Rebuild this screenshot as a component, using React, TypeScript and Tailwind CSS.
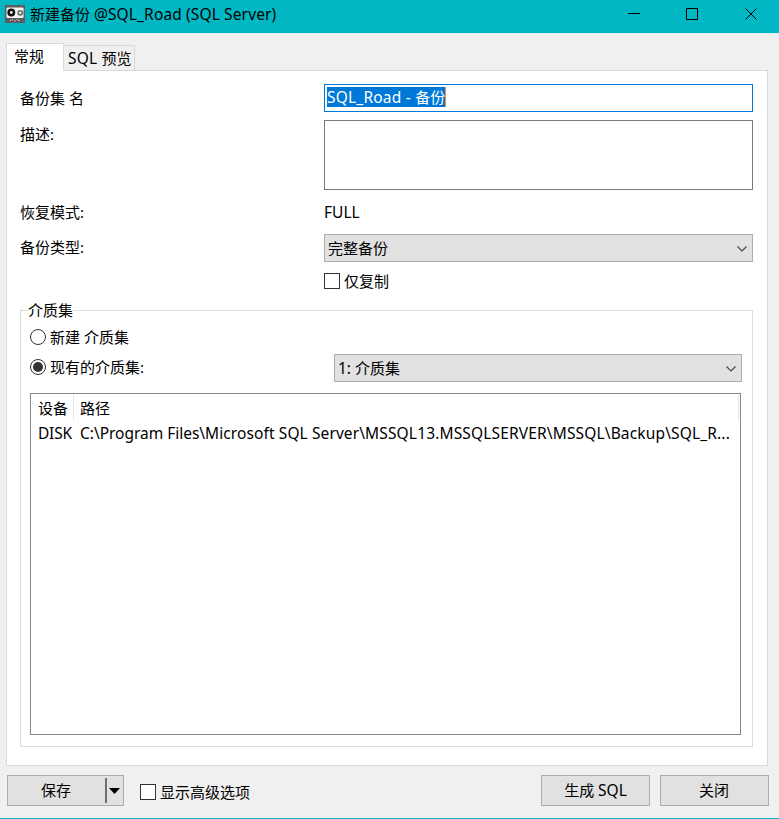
import type { ReactNode } from "react";

function Cassette() {
  return (
    <svg width="20" height="18" viewBox="0 0 20 18" className="shrink-0">
      <rect width="20" height="18" rx="1" fill="#5d5d5d" />
      <rect x="1.5" y="2.5" width="17" height="10.5" rx="1" fill="#f4f4f4" />
      <circle cx="6.3" cy="7.5" r="2.7" fill="none" stroke="#111" strokeWidth="2.5" />
      <circle cx="15.2" cy="7.8" r="2.1" fill="none" stroke="#666" strokeWidth="1.6" />
      <path d="M5 15.5h1.5M9 16h1.5M13 15.5h1.5M7 14.5h1M11.5 14.5h1" stroke="#ccc" />
    </svg>
  );
}

function CheckBox({ label }: { label: string }) {
  return (
    <label className="flex items-center">
      <span className="size-4 shrink-0 border border-[#333] bg-white" />
      <span className="ml-1">{label}</span>
    </label>
  );
}

function Radio({ checked, children }: { checked?: boolean; children: ReactNode }) {
  return (
    <label className="flex items-center">
      <span className="flex size-4 shrink-0 items-center justify-center rounded-full border border-[#333] bg-white">
        {checked && <span className="size-[10px] rounded-full bg-[#333]" />}
      </span>
      <span className="ml-1">{children}</span>
    </label>
  );
}

function Select({ children }: { children: ReactNode }) {
  return (
    <div className="flex h-7 w-full items-center justify-between border border-[#adadad] bg-[#e1e1e1] pl-[3px] pr-[5px]">
      <span className="pb-px">{children}</span>
      <svg width="10" height="6" viewBox="0 0 10 6" fill="none" stroke="#444" strokeWidth="1.1" className="mt-px">
        <path d="M.5.5 5 5 9.5.5" />
      </svg>
    </div>
  );
}

export default function App() {
  return (
    <div className="flex h-[819px] w-[779px] flex-col overflow-hidden whitespace-nowrap border-b border-[#00b7c3] bg-[#f0f0f0] font-['Noto_Sans','Noto_Sans_CJK_SC',sans-serif] text-[15px] leading-5 text-black">
      {/* Title bar */}
      <header className="flex h-[33px] shrink-0 items-start bg-[#00b7c3] pl-[5px]">
        <div className="flex h-7 items-center">
          <Cassette />
          <span className="ml-[5px]">
            新建备份 <span className="text-[15.5px] tracking-[0.13px]">@SQL_Road (SQL Server)</span>
          </span>
        </div>
        <svg width="130" height="12" viewBox="0 0 130 12" fill="none" stroke="#000" className="ml-auto mr-[21px] mt-2" shapeRendering="crispEdges">
          <path d="M0 5.5h12" />
          <path d="M58.5.5h11v11h-11z" />
          <path d="m117.5.5 11 11m0-11-11 11" shapeRendering="auto" />
        </svg>
      </header>

      {/* Tabs */}
      <div className="mx-[6px] mt-[10px] flex h-[27px] shrink-0 items-end">
        <div className="z-10 -mb-px h-7 w-[58px] border border-b-0 border-[#dadada] bg-white pl-[7px] pt-[2px]">常规</div>
        <div className="h-[25px] w-[71px] border border-b-0 border-l-0 border-[#d9d9d9] pl-1 pt-[2px]">
          <span className="text-[15.5px] tracking-[0.15px]">SQL </span>预览
        </div>
      </div>

      <main className="ml-[6px] flex h-[696px] w-[762px] shrink-0 flex-col border border-[#dadada] bg-white pl-[13px] pr-[14px] pt-[13px]">
        <div className="flex h-7 items-center">
          <span className="w-[304px]">备份集 名</span>
          <div className="flex h-7 flex-1 items-center border border-[#0078d7] pl-[2px]">
            <span className="mb-[2px] h-5 w-[119px] border-r border-[#ff8728] bg-[#0078d7] text-white">
              <span className="text-[15.5px] tracking-[0.2px]">SQL_Road - </span>备份
            </span>
          </div>
        </div>
        <div className="mt-2 flex h-[70px]">
          <span className="w-[304px] pt-1">描述:</span>
          <div className="flex-1 border border-[#7a7a7a]" />
        </div>
        <div className="mt-3 flex h-[22px] items-start">
          <span className="w-[304px]">恢复模式:</span>
          <span className="text-[15.5px]">FULL</span>
        </div>
        <div className="mt-[10px] flex h-7 items-center">
          <span className="w-[304px] pb-[2px]">备份类型:</span>
          <div className="flex-1">
            <Select>完整备份</Select>
          </div>
        </div>
        <div className="mt-[9px] flex h-5 pl-[304px]">
          <CheckBox label="仅复制" />
        </div>

        <fieldset className="mt-[9px] flex h-[447px] min-w-0 flex-col border border-[#dcdcdc] pl-[9px] pr-[10px]">
          <legend className="-ml-[2px] h-5">介质集</legend>
          <div className="mt-[7px] flex h-5">
            <Radio>新建 介质集</Radio>
          </div>
          <div className="mt-[7px] flex h-7 items-center">
            <div className="w-[304px] pb-[2px]">
              <Radio checked>现有的介质集:</Radio>
            </div>
            <div className="flex-1">
              <Select>
                <span className="text-[15.5px]">1: </span>介质集
              </Select>
            </div>
          </div>
          <div className="mr-px mt-[11px] h-[342px] shrink-0 border border-[#828790]">
            <div className="flex h-[26px] pr-px pt-px">
              <span className="w-[43px] border-r border-[#e5e5e5] pl-[7px] pt-[3px]">设备</span>
              <span className="flex-1 border-r border-[#e5e5e5] pl-[6px] pt-[3px]">路径</span>
            </div>
            <div className="flex h-[26px] items-center text-[15.5px]">
              <span className="w-[49px] pl-[7px] tracking-[-0.2px]">DISK</span>
              <span>
                <span className="tracking-[-0.02px]">C:\Program Files\</span>
                <span className="tracking-[0.1px]">Microsoft SQL Server\</span>
                <span className="tracking-[0.15px]">MSSQL13.MSSQLSERVER\MSSQL\Backup\SQL_R...</span>
              </span>
            </div>
          </div>
        </fieldset>
      </main>

      <footer className="mt-[9px] flex h-[31px] shrink-0 pl-[7px] pr-[10px]">
        <div className="flex w-[117px] items-center border border-[#adadad] bg-[#e1e1e1]">
          <span className="w-[97px] pb-[2px] pr-px text-center">保存</span>
          <span className="h-[25px] w-[2px] bg-[#6f6f6f]" />
          <svg width="11" height="6" viewBox="0 0 11 6" className="ml-[2px]">
            <path d="M0 0h11L5.5 6z" />
          </svg>
        </div>
        <div className="ml-4 flex pt-[3px]">
          <CheckBox label="显示高级选项" />
        </div>
        <div className="ml-auto flex w-[109px] items-center justify-center border border-[#adadad] bg-[#e1e1e1] pb-[2px]">
          <span>
            生成 <span className="text-[15.5px]">SQL</span>
          </span>
        </div>
        <div className="ml-[10px] flex w-[109px] items-center justify-center border border-[#adadad] bg-[#e1e1e1] pb-[2px] pr-px">关闭</div>
      </footer>
    </div>
  );
}
